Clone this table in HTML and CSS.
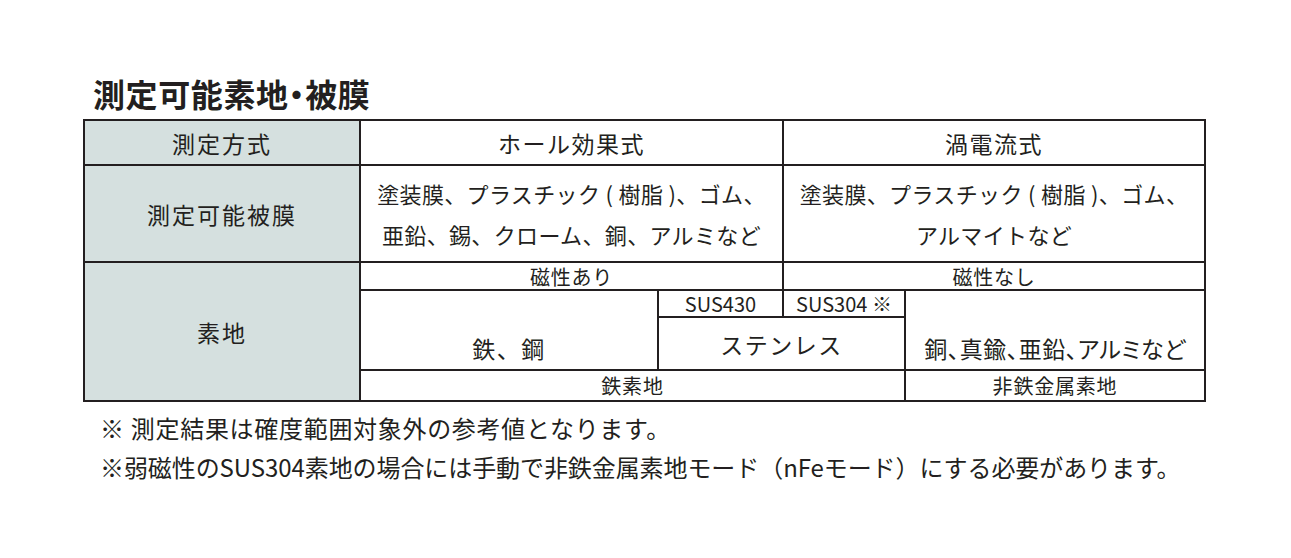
FILE: index.html
```html
<!DOCTYPE html>
<html lang="ja">
<head>
<meta charset="utf-8">
<title>測定可能素地・被膜</title>
<link rel="stylesheet" href="styles.css">
</head>
<body>
<div class="page">
  <h1 class="title">測定可能素地・被膜</h1>
  <div class="table">
    <div class="cell head r1 c1">測定方式</div>
    <div class="cell big r1 c23">ホール効果式</div>
    <div class="cell big r1 c45">渦電流式</div>

    <div class="cell head r2 c1">測定可能被膜</div>
    <div class="cell body r2 c23">塗装膜、プラスチック ( 樹脂 )、ゴム、<br>亜鉛、錫、クローム、銅、アルミなど</div>
    <div class="cell body r2 c45">塗装膜、プラスチック ( 樹脂 )、ゴム、<br>アルマイトなど</div>

    <div class="cell head r36 c1">素地</div>
    <div class="cell small r3 c23">磁性あり</div>
    <div class="cell small r3 c45">磁性なし</div>

    <div class="cell big bottom r45 c2">鉄、鋼</div>
    <div class="cell small latin r4 c3">SUS430</div>
    <div class="cell small latin r4 c4">SUS304 ※</div>
    <div class="cell big r5 c34">ステンレス</div>
    <div class="cell big bottom palt r45 c5">銅、真鍮、亜鉛、アルミなど</div>

    <div class="cell small r6 c24">鉄素地</div>
    <div class="cell small r6 c5">非鉄金属素地</div>
  </div>
  <div class="notes">
    <p class="note note-wide">※ 測定結果は確度範囲対象外の参考値となります。</p>
    <p class="note note-tight">※弱磁性のSUS304素地の場合には手動で非鉄金属素地モード（nFeモード）にする必要があります。</p>
  </div>
</div>
</body>
</html>
```

FILE: styles.css
```css
body {
  margin: 0;
  background: #ffffff;
  color: #231f20;
  font-family: "Noto Sans CJK JP", "Noto Sans", sans-serif;
}

.page {
  width: 1123px;
  padding: 73px 0 0 83px;
}

.title {
  margin: 0 0 6px 10px;
  font-size: 32px;
  font-weight: 700;
  line-height: 40px;
  font-feature-settings: "palt";
  letter-spacing: 0.6px;
}

.table {
  display: grid;
  grid-template-columns: 274px 296px 123px 120px 298px;
  grid-template-rows: 43px 95px 26px 25px 51px 29px;
  gap: 2px;
  padding: 2px;
  background: #231f20;
}

.cell {
  display: flex;
  align-items: center;
  justify-content: center;
  text-align: center;
  background: #ffffff;
  font-weight: 400;
}

.head {
  background: #d5e0df;
  font-size: 23px;
  letter-spacing: 2px;
}

.big {
  font-size: 23px;
  letter-spacing: 1.5px;
}

.body {
  font-size: 22px;
  line-height: 41px;
  letter-spacing: 0.35px;
}

.small {
  font-size: 20px;
  letter-spacing: 0.8px;
}

.latin {
  letter-spacing: 0;
}

.bottom {
  align-items: flex-end;
  padding-bottom: 4px;
}

.palt {
  font-feature-settings: "palt";
  letter-spacing: 0.5px;
}

.r1 { grid-row: 1; }
.r2 { grid-row: 2; }
.r3 { grid-row: 3; }
.r4 { grid-row: 4; }
.r5 { grid-row: 5; }
.r6 { grid-row: 6; }
.r36 { grid-row: 3 / 7; }
.r45 { grid-row: 4 / 6; }

.c1 { grid-column: 1; }
.c2 { grid-column: 2; }
.c3 { grid-column: 3; }
.c4 { grid-column: 4; }
.c5 { grid-column: 5; }
.c23 { grid-column: 2 / 4; }
.c34 { grid-column: 3 / 5; }
.c45 { grid-column: 4 / 6; }
.c24 { grid-column: 2 / 5; }

.notes {
  margin-top: 6px;
  padding-left: 17px;
}

.note {
  margin: 0;
  font-size: 24px;
  line-height: 39px;
  white-space: nowrap;
}

.note-wide {
  letter-spacing: 0.7px;
}

.note-tight {
  letter-spacing: -0.08px;
}
```
